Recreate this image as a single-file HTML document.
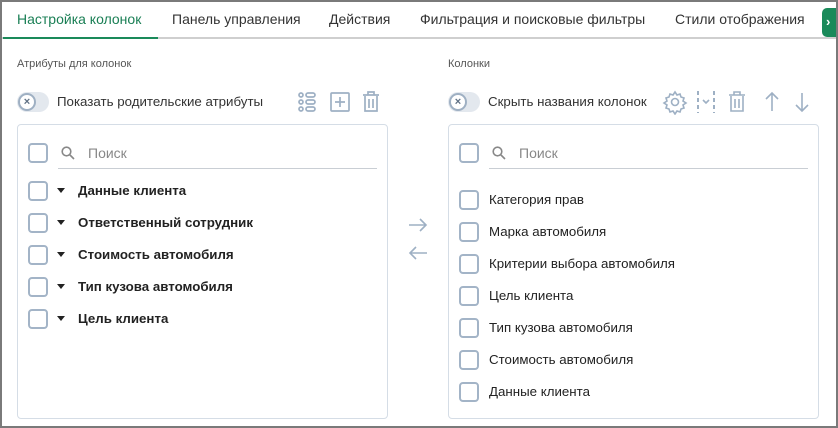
<!DOCTYPE html>
<html><head><meta charset="utf-8"><style>
*{box-sizing:border-box;margin:0;padding:0}
body{width:838px;height:428px;overflow:hidden;background:#fff;font-family:"Liberation Sans","DejaVu Sans",sans-serif;color:#222}
.frame{position:absolute;left:0;top:0;width:838px;height:428px;border:2px solid #7a7a7a}
.abs{position:absolute}
.tab{position:absolute;top:11px;font-size:14px;color:#333;white-space:nowrap}
.lbl{position:absolute;font-size:11px;color:#555}
.panel{position:absolute;border:1px solid #d5dde6;border-radius:4px;top:124px;height:295px}
.cb{position:absolute;width:20px;height:20px;border:2px solid #a3b4c7;border-radius:4px;background:#fff}
.t{position:absolute;font-size:13.3px;white-space:nowrap}
.b{font-weight:bold;color:#222}
.tri{position:absolute;width:0;height:0;border-left:4px solid transparent;border-right:4px solid transparent;border-top:5px solid #222}
.tog{position:absolute;width:32px;height:20px;border-radius:10px;background:#e3e8ee}
.tog i{position:absolute;left:1px;top:1px;width:18px;height:18px;border-radius:50%;background:#fff;border:2px solid #9fb0c3;font-style:normal;font-size:11px;line-height:14px;text-align:center;color:#5d6f83;font-weight:bold}
.ph{position:absolute;font-size:14px;color:#888}
.ul{position:absolute;height:1px;background:#c9ced4}
</style></head><body>
<div class="abs" style="left:0;top:37px;width:838px;height:2px;background:#cfcfcf"></div>
<div class="abs" style="left:3px;top:37px;width:155px;height:2px;background:#1a8a5a"></div>
<div class="tab" style="left:17px;color:#1a7f55">Настройка колонок</div>
<div class="tab" style="left:172px">Панель управления</div>
<div class="tab" style="left:329px">Действия</div>
<div class="tab" style="left:420px">Фильтрация и поисковые фильтры</div>
<div class="tab" style="left:675px">Стили отображения</div>
<div class="abs" style="left:822px;top:8px;width:16px;height:29px;background:#1a8a5a;border-radius:5px 0 0 5px;color:#fff;font-weight:bold;font-size:13px;line-height:28px;padding-left:4px">›</div>

<div class="lbl" style="left:17px;top:58px">Атрибуты для колонок</div>
<div class="lbl" style="left:448px;top:58px">Колонки</div>

<div class="tog" style="left:17px;top:92px"><i>×</i></div>
<div class="t" style="left:57px;top:94px;color:#333">Показать родительские атрибуты</div>
<svg class="abs" style="left:296px;top:90px" width="90" height="24" fill="none" stroke="#9eb0c4" stroke-width="1.7">
<circle cx="5" cy="5" r="2"/><circle cx="5" cy="12" r="2"/><circle cx="5" cy="19" r="2"/>
<rect x="10" y="3" width="9" height="4" rx="2"/><rect x="10" y="10" width="9" height="4" rx="2"/><rect x="10" y="17" width="9" height="4" rx="2"/>
<rect x="35" y="3" width="18" height="18" rx="1"/><path d="M44 7v10M39 12h10"/>
<path d="M67 5h16M72 5V2h6v3M69 6v15h12V6M73 9v9M77 9v9"/>
</svg>

<div class="tog" style="left:448px;top:92px"><i>×</i></div>
<div class="t" style="left:488px;top:94px;color:#333">Скрыть названия колонок</div>
<svg class="abs" style="left:662px;top:89px" width="156" height="26" fill="none" stroke="#9eb0c4" stroke-width="1.6">
<circle cx="13" cy="13" r="3.5"/><path d="M13 3l2 3 3-1 1 3 3 1-1 3 3 2-3 2 1 3-3 1-1 3-3-1-2 3-2-3-3 1-1-3-3-1 1-3-3-2 3-2-1-3 3-1 1-3 3 1z"/>
<path d="M36 2v22M52 2v22" stroke-width="2" stroke-dasharray="4 3"/><path d="M41 11l3 3 3-3"/>
<path d="M67 6h16M72 6V3h6v3M69 7v15h12V7M73 10v9M77 10v9"/>
<path d="M110 4v18M104 10l6-6 6 6"/>
<path d="M140 4v18M134 16l6 6 6-6"/>
</svg>

<div class="panel" style="left:17px;width:371px"></div>
<div class="cb" style="left:28px;top:143px"></div>
<svg class="abs" style="left:61px;top:146px" width="14" height="14" fill="none" stroke="#888" stroke-width="1.6"><circle cx="5.5" cy="5.5" r="4.3"/><path d="M9 9l4 4"/></svg>
<div class="ph" style="left:88px;top:145px">Поиск</div>
<div class="ul" style="left:58px;top:168px;width:319px"></div>
<div class="cb" style="left:28px;top:181px"></div><div class="tri" style="left:57px;top:188px"></div><div class="t b" style="left:78px;top:183px">Данные клиента</div>
<div class="cb" style="left:28px;top:213px"></div><div class="tri" style="left:57px;top:220px"></div><div class="t b" style="left:78px;top:215px">Ответственный сотрудник</div>
<div class="cb" style="left:28px;top:245px"></div><div class="tri" style="left:57px;top:252px"></div><div class="t b" style="left:78px;top:247px">Стоимость автомобиля</div>
<div class="cb" style="left:28px;top:277px"></div><div class="tri" style="left:57px;top:284px"></div><div class="t b" style="left:78px;top:279px">Тип кузова автомобиля</div>
<div class="cb" style="left:28px;top:309px"></div><div class="tri" style="left:57px;top:316px"></div><div class="t b" style="left:78px;top:311px">Цель клиента</div>

<svg class="abs" style="left:406px;top:216px" width="24" height="46" fill="none" stroke="#9eb0c4" stroke-width="1.6"><path d="M3 9h17M14 3l6 6-6 6"/><path d="M21 37H4M10 31l-6 6 6 6"/></svg>

<div class="panel" style="left:448px;width:371px"></div>
<div class="cb" style="left:459px;top:143px"></div>
<svg class="abs" style="left:492px;top:146px" width="14" height="14" fill="none" stroke="#888" stroke-width="1.6"><circle cx="5.5" cy="5.5" r="4.3"/><path d="M9 9l4 4"/></svg>
<div class="ph" style="left:519px;top:145px">Поиск</div>
<div class="ul" style="left:489px;top:168px;width:319px"></div>
<div class="cb" style="left:459px;top:190px"></div><div class="t" style="left:489px;top:192px">Категория прав</div>
<div class="cb" style="left:459px;top:222px"></div><div class="t" style="left:489px;top:224px">Марка автомобиля</div>
<div class="cb" style="left:459px;top:254px"></div><div class="t" style="left:489px;top:256px">Критерии выбора автомобиля</div>
<div class="cb" style="left:459px;top:286px"></div><div class="t" style="left:489px;top:288px">Цель клиента</div>
<div class="cb" style="left:459px;top:318px"></div><div class="t" style="left:489px;top:320px">Тип кузова автомобиля</div>
<div class="cb" style="left:459px;top:350px"></div><div class="t" style="left:489px;top:352px">Стоимость автомобиля</div>
<div class="cb" style="left:459px;top:382px"></div><div class="t" style="left:489px;top:384px">Данные клиента</div>

<div class="frame"></div>
</body></html>
